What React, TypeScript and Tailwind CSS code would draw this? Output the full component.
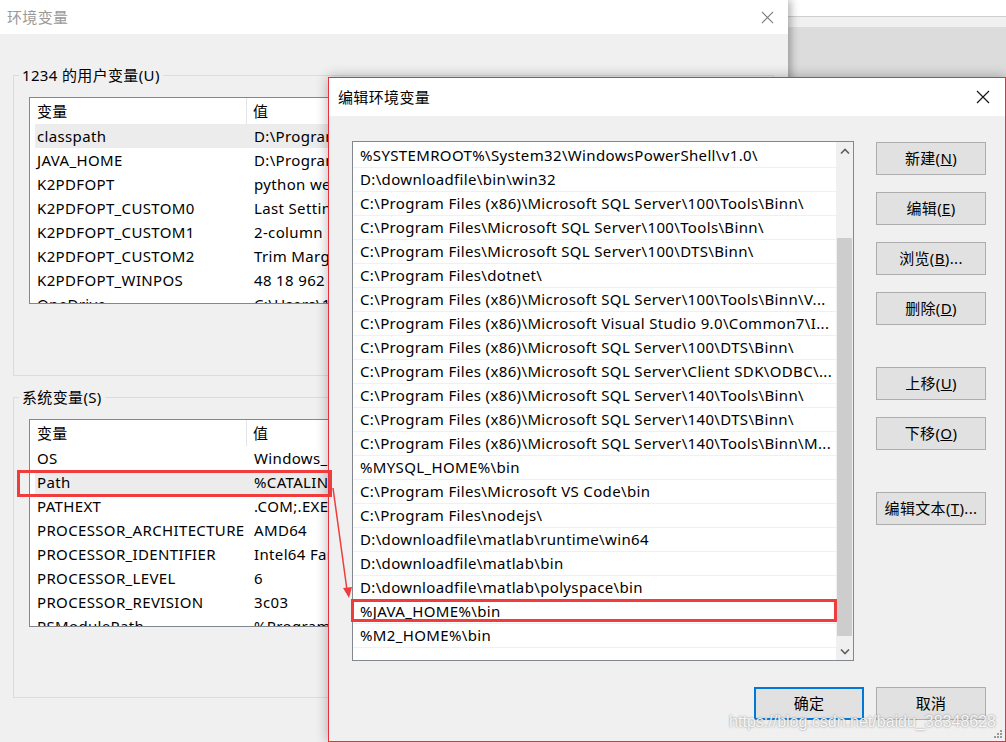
import type { ReactNode } from 'react'

const FONT = "font-['Noto_Sans','Noto_Sans_CJK_SC',sans-serif]"

const userVars: [string, string][] = [
  ['classpath', 'D:\\Program Files\\Java\\jdk1.8.0_191\\lib'],
  ['JAVA_HOME', 'D:\\Program Files\\Java\\jdk1.8.0_191'],
  ['K2PDFOPT', 'python web tools'],
  ['K2PDFOPT_CUSTOM0', 'Last Settings'],
  ['K2PDFOPT_CUSTOM1', '2-column pdf'],
  ['K2PDFOPT_CUSTOM2', 'Trim Margins'],
  ['K2PDFOPT_WINPOS', '48 18 962 744'],
  ['OneDrive', 'C:\\Users\\1234\\OneDrive'],
]

const sysVars: [string, string][] = [
  ['OS', 'Windows_NT'],
  ['Path', '%CATALINA_HOME%\\bin'],
  ['PATHEXT', '.COM;.EXE;.BAT;.CMD'],
  ['PROCESSOR_ARCHITECTURE', 'AMD64'],
  ['PROCESSOR_IDENTIFIER', 'Intel64 Family 6 Model 60'],
  ['PROCESSOR_LEVEL', '6'],
  ['PROCESSOR_REVISION', '3c03'],
  ['PSModulePath', '%ProgramFiles%\\WindowsPowerShell'],
]

const paths = [
  '%SYSTEMROOT%\\System32\\WindowsPowerShell\\v1.0\\',
  'D:\\downloadfile\\bin\\win32',
  'C:\\Program Files (x86)\\Microsoft SQL Server\\100\\Tools\\Binn\\',
  'C:\\Program Files\\Microsoft SQL Server\\100\\Tools\\Binn\\',
  'C:\\Program Files\\Microsoft SQL Server\\100\\DTS\\Binn\\',
  'C:\\Program Files\\dotnet\\',
  'C:\\Program Files (x86)\\Microsoft SQL Server\\100\\Tools\\Binn\\V...',
  'C:\\Program Files (x86)\\Microsoft Visual Studio 9.0\\Common7\\I...',
  'C:\\Program Files (x86)\\Microsoft SQL Server\\100\\DTS\\Binn\\',
  'C:\\Program Files (x86)\\Microsoft SQL Server\\Client SDK\\ODBC\\...',
  'C:\\Program Files (x86)\\Microsoft SQL Server\\140\\Tools\\Binn\\',
  'C:\\Program Files (x86)\\Microsoft SQL Server\\140\\DTS\\Binn\\',
  'C:\\Program Files (x86)\\Microsoft SQL Server\\140\\Tools\\Binn\\M...',
  '%MYSQL_HOME%\\bin',
  'C:\\Program Files\\Microsoft VS Code\\bin',
  'C:\\Program Files\\nodejs\\',
  'D:\\downloadfile\\matlab\\runtime\\win64',
  'D:\\downloadfile\\matlab\\bin',
  'D:\\downloadfile\\matlab\\polyspace\\bin',
  '%JAVA_HOME%\\bin',
  '%M2_HOME%\\bin',
]

function CloseX({ size, color }: { size: number; color: string }) {
  return (
    <svg width={size} height={size} viewBox="0 0 14 14">
      <path d="M1 1L13 13M13 1L1 13" stroke={color} strokeWidth="1.1" />
    </svg>
  )
}

function VarList({ rows, selected, height }: { rows: [string, string][]; selected: number; height: string }) {
  return (
    <div className={`${height} w-[728px] border border-[#828790] bg-white overflow-hidden`}>
      <div className="h-[26px] flex items-center">
        <div className="w-[217px] h-full flex items-center pl-[7px] border-r border-[#e5e5e5]">变量</div>
        <div className="pl-[6px]">值</div>
      </div>
      {rows.map(([k, v], i) => (
        <div key={k} className={`h-[24px] ml-[5px] flex items-center ${i === selected ? 'bg-[#ececec]' : ''}`}>
          <div className="w-[219px] pl-[2px] whitespace-nowrap overflow-hidden">{k}</div>
          <div className="whitespace-nowrap">{v}</div>
        </div>
      ))}
    </div>
  )
}

function GroupBox({ label, children, h }: { label: string; children: ReactNode; h: string }) {
  return (
    <fieldset className={`${h} w-[761px] border border-[#dcdcdc]`}>
      <legend className="ml-[5px] px-[3px] leading-[18px]">{label}</legend>
      <div className="pl-[15px]">{children}</div>
    </fieldset>
  )
}

function Btn({ children, primary }: { children: ReactNode; primary?: boolean }) {
  return (
    <div
      className={`w-[110px] h-[33px] flex items-center justify-center bg-[#e1e1e1] ${
        primary ? 'border-2 border-[#0078d7]' : 'border border-[#adadad]'
      }`}
    >
      {children}
    </div>
  )
}

function Chevron({ up }: { up?: boolean }) {
  return (
    <svg width="10" height="6" viewBox="0 0 10 6">
      <path d={up ? 'M1 5.5L5 1.5L9 5.5' : 'M1 0.5L5 4.5L9 0.5'} stroke="#606060" strokeWidth="1.6" fill="none" />
    </svg>
  )
}

function EditDialog() {
  return (
    <div className="absolute z-20 left-[328px] top-[77px] w-[678px] h-[665px] border border-[#e8313c] bg-[#f0f0f0] shadow-[0_0_12px_rgba(0,0,0,0.3)] flex flex-col">
      <div className="h-[38px] bg-white flex items-center justify-between pl-[9px] pr-[15px] shrink-0">
        <span className="text-black">编辑环境变量</span>
        <CloseX size={14} color="#111" />
      </div>
      <div className="flex-1 flex flex-col pl-[23px] pr-[19px] pt-[25px]">
        <div className="flex gap-[22px]">
          <div className="relative w-[502px] h-[520px] border border-[#828790] bg-white flex overflow-hidden">
            <div className="flex-1 pt-[2px] overflow-hidden">
              {paths.map((p) => (
                <div key={p} className="h-[24px] border-b border-[#f0f0f0] flex items-center pl-[7px] whitespace-nowrap">
                  {p}
                </div>
              ))}
            </div>
            <div className="w-[17px] bg-[#f0f0f0] flex flex-col items-center">
              <div className="h-[17px] flex items-center justify-center">
                <Chevron up />
              </div>
              <div className="h-[79px]" />
              <div className="w-[15px] h-[398px] bg-[#cdcdcd]" />
              <div className="flex-1" />
              <div className="h-[17px] flex items-center justify-center">
                <Chevron />
              </div>
            </div>
          </div>
          <div className="flex flex-col pt-[1px]">
            <div className="flex flex-col gap-[17px]">
              <Btn>新建(<u>N</u>)</Btn>
              <Btn>编辑(<u>E</u>)</Btn>
              <Btn>浏览(<u>B</u>)...</Btn>
              <Btn>删除(<u>D</u>)</Btn>
            </div>
            <div className="flex flex-col gap-[17px] mt-[42px]">
              <Btn>上移(<u>U</u>)</Btn>
              <Btn>下移(<u>O</u>)</Btn>
            </div>
            <div className="mt-[42px]">
              <Btn>编辑文本(<u>T</u>)...</Btn>
            </div>
          </div>
        </div>
        <div className="flex justify-end gap-[12px] mt-[26px]">
          <Btn primary>确定</Btn>
          <Btn>取消</Btn>
        </div>
      </div>
      <div className="absolute right-[9px] bottom-[7px] font-['Liberation_Sans',sans-serif] text-[16px] tracking-normal text-white/90 [text-shadow:0_0_2px_rgba(110,110,110,0.9)]">
        https://blog.csdn.net/baidu_38348628
      </div>
      <svg className="absolute right-[2px] bottom-[2px]" width="10" height="10" viewBox="0 0 10 10">
        <rect x="7" y="1" width="2" height="2" fill="#9a9a9a" />
        <rect x="4" y="4" width="2" height="2" fill="#9a9a9a" />
        <rect x="7" y="4" width="2" height="2" fill="#9a9a9a" />
        <rect x="1" y="7" width="2" height="2" fill="#9a9a9a" />
        <rect x="4" y="7" width="2" height="2" fill="#9a9a9a" />
        <rect x="7" y="7" width="2" height="2" fill="#9a9a9a" />
      </svg>
    </div>
  )
}

export default function App() {
  return (
    <div className={`relative w-[1006px] h-[742px] overflow-hidden flex text-[15px] tracking-[0.35px] text-black ${FONT}`}>
      <div className="relative z-10 w-[788px] h-full bg-[#f0f0f0] flex flex-col shadow-[3px_0_8px_rgba(0,0,0,0.3)]">
        <div className="h-[34px] bg-white flex items-center justify-between pl-[7px] pr-[14px] shrink-0">
          <span className="text-[#9a9a9a]">环境变量</span>
          <CloseX size={13} color="#777" />
        </div>
        <div className="pl-[13px] pt-[32px] flex flex-col gap-[12px]">
          <GroupBox label="1234 的用户变量(U)" h="h-[310px]">
            <div className="mt-[13px]">
              <VarList rows={userVars} selected={0} height="h-[207px]" />
            </div>
          </GroupBox>
          <GroupBox label="系统变量(S)" h="h-[310px]">
            <div className="mt-[13px]">
              <VarList rows={sysVars} selected={1} height="h-[208px]" />
            </div>
          </GroupBox>
        </div>
      </div>
      <div className="flex-1 flex flex-col">
        <div className="h-[17px] bg-white border-b border-[#cfcfcf]" />
        <div className="h-[10px] bg-[#f0f0f0]" />
        <div className="flex-1 bg-[#dcdcdc]" />
      </div>
      <EditDialog />
      <div className="absolute left-[17px] top-[470px] w-[315px] h-[27px] border-[3px] border-[#f03c3c] z-30" />
      <div className="absolute left-[351px] top-[599px] w-[486px] h-[23px] border-[3px] border-[#f03c3c] z-30" />
      <svg className="absolute left-0 top-0 z-30 pointer-events-none" width="1006" height="742">
        <line x1="333" y1="488" x2="347" y2="590" stroke="#f03c3c" strokeWidth="1.5" />
        <path d="M343 588L352 587L349 598Z" fill="#f03c3c" />
      </svg>
    </div>
  )
}
